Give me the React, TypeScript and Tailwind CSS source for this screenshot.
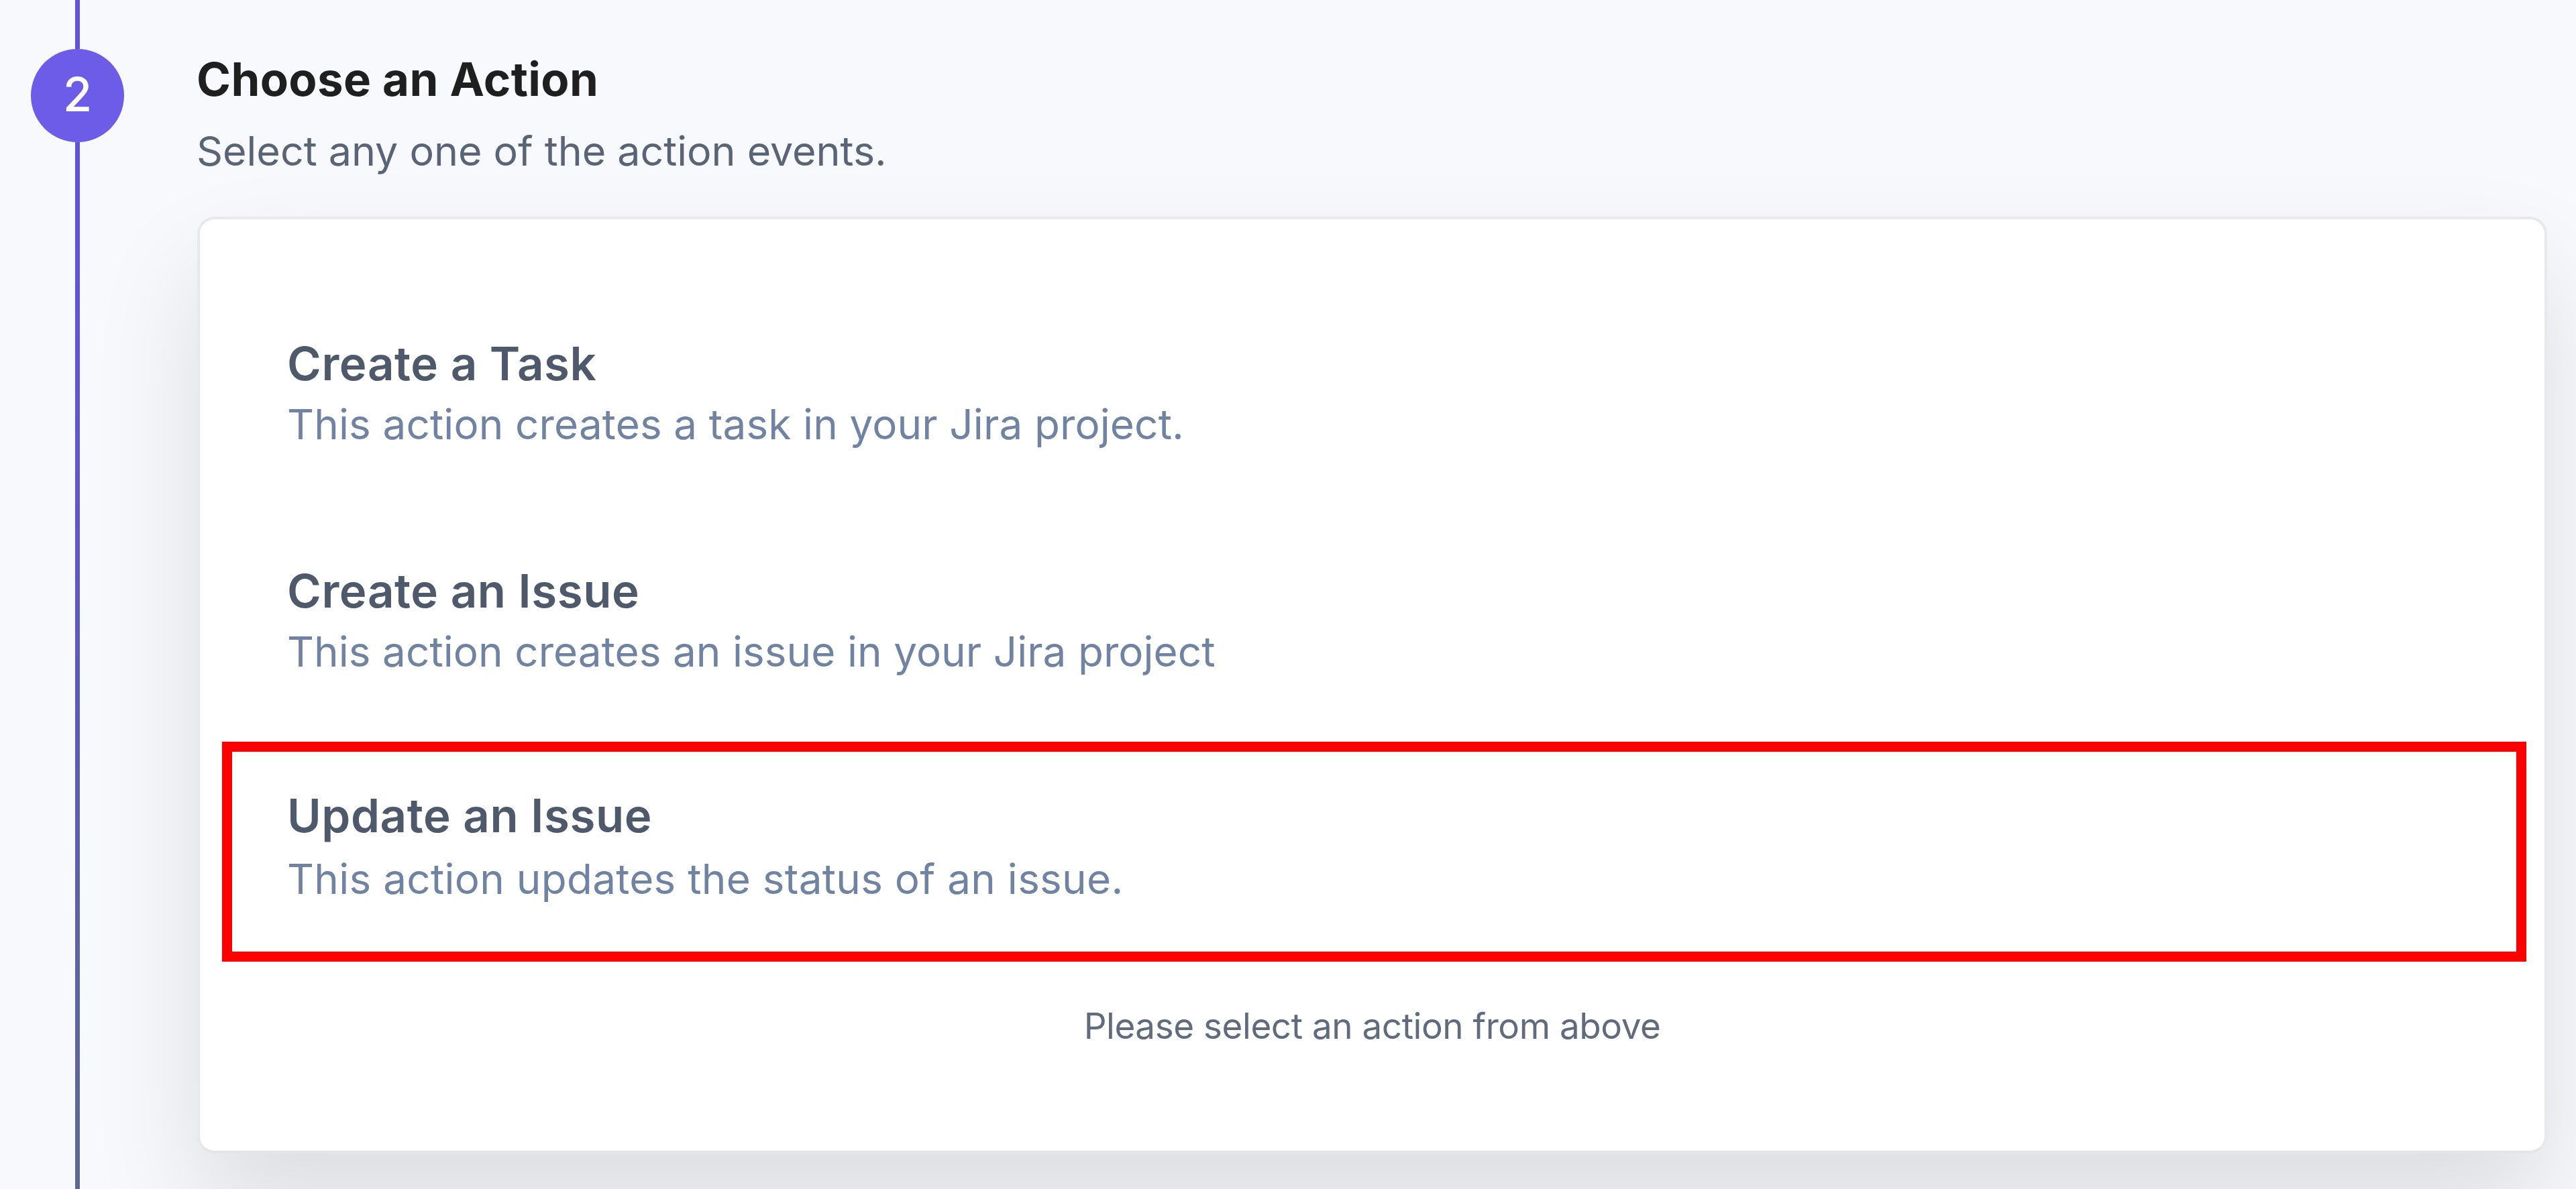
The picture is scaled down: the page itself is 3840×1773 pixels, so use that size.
type Action = {
  title: string;
  description: string;
  box: string;
  titleClass: string;
  descriptionClass: string;
};

const actions: Action[] = [
  {
    title: "Create a Task",
    description: "This action creates a task in your Jira project.",
    box: "border-transparent",
    titleClass: "tracking-[0.57px]",
    descriptionClass: "mt-[11px] tracking-[0.12px]",
  },
  {
    title: "Create an Issue",
    description: "This action creates an issue in your Jira project",
    box: "mt-[11px] border-transparent",
    titleClass: "tracking-[0.57px]",
    descriptionClass: "mt-[11px] tracking-[0.05px]",
  },
  {
    title: "Update an Issue",
    description: "This action updates the status of an issue.",
    box: "mt-[7px] border-[#ff0000]",
    titleClass: "tracking-[0.57px]",
    descriptionClass: "mt-[15px] tracking-[0.26px]",
  },
];

function StepRail() {
  return (
    <div className="ml-[46px] flex w-[139px] shrink-0 flex-col items-center">
      <div className="h-[73px] w-[7px] bg-[#6152dc]" />
      <div className="flex h-[139px] w-[139px] shrink-0 items-center justify-center rounded-full bg-[#6c5ce7] pb-1 text-[70px] leading-none font-medium text-white">
        2
      </div>
      <div className="w-[7px] flex-1 bg-linear-to-b from-[#6051de] from-10% via-[#5c5bb4] via-55% to-[#5a6a94]" />
    </div>
  );
}

function ActionItem({ title, description, box, titleClass, descriptionClass }: Action) {
  return (
    <button
      type="button"
      className={`flex h-[328px] flex-col items-start border-[15px] pt-[53px] pl-[82px] text-left ${box}`}
    >
      <span className={`text-[69px] leading-[84px] font-semibold whitespace-nowrap text-[#4e596b] ${titleClass}`}>
        {title}
      </span>
      <span className={`text-[62px] leading-[76px] whitespace-nowrap text-[#7083a3] ${descriptionClass}`}>
        {description}
      </span>
    </button>
  );
}

export default function App() {
  return (
    <div className="flex h-[1773px] w-[3840px] overflow-hidden bg-[#f8f9fd] font-['Inter',sans-serif]">
      <StepRail />
      <main className="ml-[108px] w-[3504px] pt-[76px]">
        <h2 className="text-[69px] leading-[84px] font-bold tracking-[0.34px] text-[#1f1f1f]">Choose an Action</h2>
        <p className="mt-[27px] text-[61px] leading-[76px] tracking-[-0.04px] text-[#596476]">
          Select any one of the action events.
        </p>
        <section className="mt-[60px] ml-[1px] flex h-[1397px] flex-col rounded-[26px] border-[4px] border-[#e9e9e9] border-b-[#e5e5e6] bg-white pt-[105px] pr-[27px] pl-[33px] shadow-[0_80px_160px_rgba(10,10,0,0.115)]">
          {actions.map((action) => (
            <ActionItem key={action.title} {...action} />
          ))}
          <p className="mt-[64px] pr-[6px] text-center text-[53px] leading-[64px] tracking-[-0.46px] text-[#606b7d]">
            Please select an action from above
          </p>
        </section>
      </main>
    </div>
  );
}
